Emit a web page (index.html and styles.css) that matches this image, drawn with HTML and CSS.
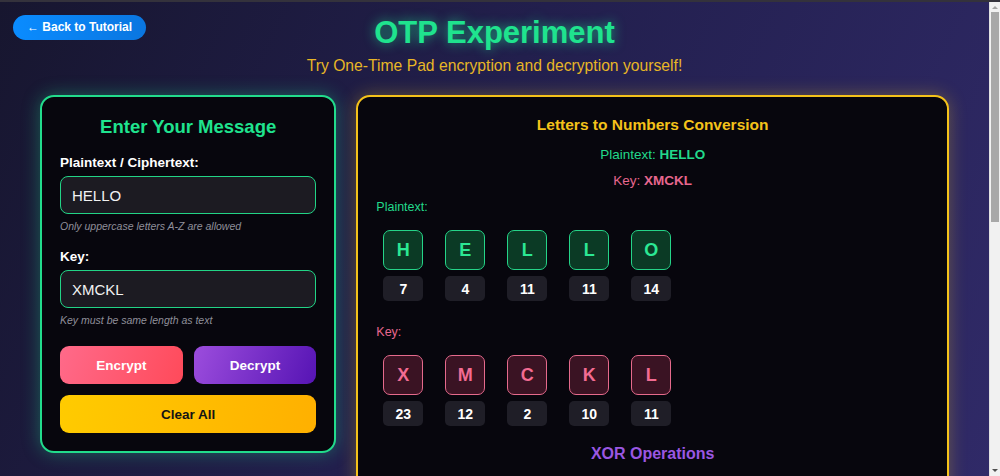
FILE: index.html
```html
<!DOCTYPE html>
<html lang="en">
<head>
  <meta charset="UTF-8">
  <meta name="viewport" content="width=device-width, initial-scale=1.0">
  <title>OTP Experiment</title>
  <link rel="stylesheet" href="styles.css">
</head>
<body>

<a href="#" class="back-button">&larr; Back to Tutorial</a>

<header class="page-header">
  <h1 class="page-title">OTP Experiment</h1>
  <p class="page-subtitle">Try One-Time Pad encryption and decryption yourself!</p>
</header>

<main class="experiment">
  <!-- Input panel -->
  <section class="card card-input">
    <h2 class="card-title">Enter Your Message</h2>

    <div class="form-group">
      <label class="form-label" for="textInput">Plaintext / Ciphertext:</label>
      <input type="text" class="form-control" id="textInput" value="HELLO">
      <div class="form-hint">Only uppercase letters A-Z are allowed</div>
    </div>

    <div class="form-group">
      <label class="form-label" for="keyInput">Key:</label>
      <input type="text" class="form-control" id="keyInput" value="XMCKL">
      <div class="form-hint">Key must be same length as text</div>
    </div>

    <div class="button-row">
      <button type="button" class="btn btn-encrypt">Encrypt</button>
      <button type="button" class="btn btn-decrypt">Decrypt</button>
    </div>
    <button type="button" class="btn btn-clear">Clear All</button>
  </section>

  <!-- Visualization panel -->
  <section class="card card-output">
    <h3 class="section-title">Letters to Numbers Conversion</h3>
    <p class="summary summary-plain">Plaintext: <strong>HELLO</strong></p>
    <p class="summary summary-key">Key: <strong>XMCKL</strong></p>

    <div class="row-label row-label-plain">Plaintext:</div>
    <div class="letter-row" id="plainRow"></div>

    <div class="row-label row-label-key">Key:</div>
    <div class="letter-row letter-row-last" id="keyRow"></div>

    <h3 class="section-title section-title-xor">XOR Operations</h3>
    <div class="xor-list" id="xorList"></div>
  </section>
</main>

<!-- window scrollbar, as in the capture -->
<div class="fake-scrollbar" aria-hidden="true">
  <div class="scroll-arrow scroll-arrow-up"></div>
  <div class="scroll-thumb"></div>
  <div class="scroll-arrow scroll-arrow-down"></div>
</div>

<script>
  document.addEventListener("DOMContentLoaded", function() {
      const plain = "HELLO";
      const key = "XMCKL";

      // Build one row of letter tiles with their numbers
      function buildRow(rowId, text, kind) {
          const row = document.getElementById(rowId);
          for (const ch of text) {
              const col = document.createElement("div");
              col.className = "letter-col";
              col.innerHTML =
                  "<div class='letter-box letter-" + kind + "'>" + ch + "</div>" +
                  "<div class='number-box'>" + (ch.charCodeAt(0) - 65) + "</div>";
              row.appendChild(col);
          }
      }

      buildRow("plainRow", plain, "plain");
      buildRow("keyRow", key, "key");

      // XOR lines (below the fold)
      const list = document.getElementById("xorList");
      for (let i = 0; i < plain.length; i++) {
          const p = plain.charCodeAt(i) - 65;
          const k = key.charCodeAt(i) - 65;
          const line = document.createElement("div");
          line.className = "xor-line";
          line.textContent = plain[i] + " (" + p + ") ⊕ " + key[i] + " (" + k + ") = " + (p ^ k);
          list.appendChild(line);
      }
  });
</script>

</body>
</html>
```

FILE: styles.css
```css
/* Page base */
html {
  border-top: 2px solid #34323c;
}

body {
  margin: 0 11px 0 0;
  min-height: 100vh;
  font-family: "Liberation Sans", Arial, sans-serif;
  color: #fff;
  background: linear-gradient(115deg, #17162f 0%, #221f4d 45%, #302a68 100%);
  background-attachment: fixed;
}

/* Back link */
.back-button {
  position: absolute;
  top: 15px;
  left: 13px;
  padding: 0 14px;
  height: 25px;
  line-height: 25px;
  border-radius: 13px;
  background: linear-gradient(90deg, #0a8cff, #0a76e0);
  color: #fff;
  font-size: 12px;
  font-weight: bold;
  text-decoration: none;
}

/* Header */
.page-header {
  padding-top: 12px;
  text-align: center;
}

.page-title {
  margin: 0;
  font-size: 31px;
  line-height: 37px;
  color: #1fe38e;
  text-shadow: 0 0 12px rgba(30, 240, 150, 0.65);
}

.page-subtitle {
  margin: 5px 0 0;
  font-size: 15.7px;
  line-height: 19px;
  color: #e8b626;
}

/* Two column layout */
.experiment {
  display: grid;
  grid-template-columns: 1fr 2fr;
  gap: 20px;
  padding: 20px 40px 40px;
}

.card {
  background-color: #07060d;
  border: 2px solid;
  border-radius: 14px;
  padding: 19px 18px 18px;
}

.card-input {
  align-self: start;
  border-color: #22dc8c;
  box-shadow: 0 0 18px rgba(30, 230, 140, 0.35);
}

.card-output {
  border-color: #f4c21a;
  box-shadow: 0 0 18px rgba(250, 200, 20, 0.3);
}

/* Input card */
.card-title {
  margin: 0 0 16px;
  text-align: center;
  font-size: 18.5px;
  line-height: 22px;
  color: #1fe38e;
}

.form-group {
  margin-bottom: 15px;
}

.form-label {
  display: block;
  margin-bottom: 5px;
  font-size: 13.5px;
  line-height: 17px;
  font-weight: bold;
}

.form-control {
  display: block;
  box-sizing: border-box;
  width: 100%;
  height: 38px;
  padding: 0 11px;
  border: 1.5px solid #22d486;
  border-radius: 8px;
  background-color: #1c1b22;
  color: #f2f2f2;
  font-family: inherit;
  font-size: 15px;
  outline: none;
}

.form-hint {
  margin-top: 6px;
  font-size: 10.5px;
  line-height: 13px;
  font-style: italic;
  color: #8f8f9a;
}

.button-row {
  display: flex;
  gap: 11px;
  margin: 19px 0 11px;
}

.btn {
  display: block;
  flex: 1;
  height: 38px;
  border: none;
  border-radius: 9px;
  font-family: inherit;
  font-size: 13.5px;
  font-weight: bold;
  color: #fff;
  cursor: pointer;
}

.btn-encrypt {
  background: linear-gradient(110deg, #ff6a8a, #ff4a5a);
}

.btn-decrypt {
  background: linear-gradient(110deg, #9c4ddd, #5614b4);
}

.btn-clear {
  width: 100%;
  background: linear-gradient(100deg, #ffcb00, #ffb000);
  color: #141414;
}

/* Output card */
.section-title {
  margin: -1px 0 12px;
  text-align: center;
  font-size: 15.5px;
  line-height: 19px;
  color: #f4c21a;
}

.summary {
  margin: 0 0 9px;
  text-align: center;
  font-size: 13.5px;
  line-height: 17px;
}

.summary-plain {
  color: #22d98b;
}

.summary-key {
  color: #e8678f;
  margin-bottom: 11px;
}

.row-label {
  margin-bottom: 15px;
  font-size: 12.5px;
  line-height: 15px;
}

.row-label-plain {
  color: #22d98b;
}

.row-label-key {
  color: #e8678f;
}

.letter-row {
  display: flex;
  gap: 22px;
  padding-left: 7px;
  margin-bottom: 24px;
}

.letter-row-last {
  margin-bottom: 18px;
}

.letter-col {
  display: flex;
  flex-direction: column;
  gap: 6px;
  width: 40px;
}

.letter-box {
  box-sizing: border-box;
  height: 40px;
  border: 1.5px solid;
  border-radius: 7px;
  display: flex;
  align-items: center;
  justify-content: center;
  font-size: 18px;
  font-weight: bold;
}

.letter-plain {
  background-color: #0b3a25;
  border-color: #25d488;
  color: #2be894;
}

.letter-key {
  background-color: #3a1323;
  border-color: #e56a8c;
  color: #f26b92;
}

.number-box {
  height: 25px;
  border-radius: 5px;
  background-color: #1f1e27;
  display: flex;
  align-items: center;
  justify-content: center;
  font-size: 14px;
  font-weight: bold;
}

.section-title-xor {
  margin: 0 0 14px;
  font-size: 16px;
  color: #9a57e2;
}

.xor-line {
  margin-bottom: 10px;
  padding: 10px 14px;
  border-radius: 8px;
  background-color: #16151f;
  font-size: 13.5px;
  color: #ddd;
}

/* Window scrollbar drawing */
.fake-scrollbar {
  position: fixed;
  top: 2px;
  right: 0;
  bottom: 0;
  width: 11px;
  background-color: #f1f1f1;
  border-left: 1px solid #e2e2e2;
  box-sizing: border-box;
}

.scroll-thumb {
  margin: 0 1px;
  height: 210px;
  background-color: #a8a8a8;
}

.scroll-arrow {
  height: 10px;
  position: relative;
}

.scroll-arrow::after {
  content: "";
  position: absolute;
  left: 2px;
  border-left: 3px solid transparent;
  border-right: 3px solid transparent;
}

.scroll-arrow-up::after {
  top: 4px;
  border-bottom: 3px solid #a3a3a3;
}

.scroll-arrow-down {
  position: absolute;
  bottom: 0;
  left: 0;
  right: 0;
}

.scroll-arrow-down::after {
  top: 3px;
  border-top: 3px solid #505050;
}
```
